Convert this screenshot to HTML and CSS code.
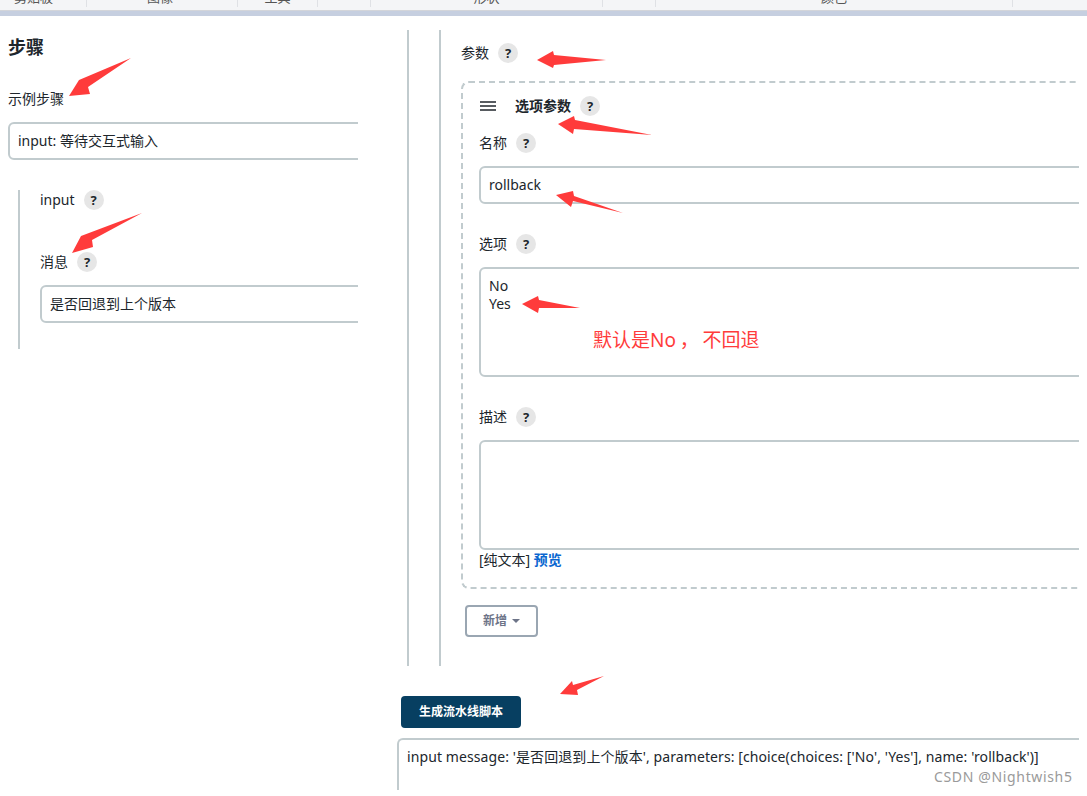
FILE: index.html
```html
<!DOCTYPE html>
<html lang="zh">
<head>
<meta charset="utf-8">
<title>Jenkins input step</title>
<link rel="stylesheet" href="styles.css">
</head>
<body>
<div class="ribbon">
  <div class="group g1"><span>剪贴板</span></div>
  <div class="group g2"><span>图像</span></div>
  <div class="group g3"><span>工具</span></div>
  <div class="group g4"></div>
  <div class="group g5"><span>形状</span></div>
  <div class="group g6"></div>
  <div class="group g7"><span>颜色</span></div>
  <div class="group g8"></div>
</div>
<div class="strip"></div>
<main class="main">
  <section class="left">
    <h2 class="title">步骤</h2>
    <div class="label sample">示例步骤</div>
    <div class="field">input: 等待交互式输入</div>
    <div class="indent">
      <div class="row"><span>input</span><span class="help">?</span></div>
      <div class="row msg"><span>消息</span><span class="help">?</span></div>
      <div class="field">是否回退到上个版本</div>
    </div>
  </section>
  <section class="right">
    <div class="rail">
      <div class="rail-inner">
        <div class="row params"><span>参数</span><span class="help">?</span></div>
        <div class="dashed">
          <div class="row head">
            <svg class="drag" width="16" height="10" viewBox="0 0 16 10"><path d="M0 1h16M0 5h16M0 9h16" stroke="#20262c" stroke-width="1.5"/></svg>
            <strong>选项参数</strong><span class="help">?</span>
          </div>
          <div class="row r-name"><span>名称</span><span class="help">?</span></div>
          <div class="field">rollback</div>
          <div class="row r-next"><span>选项</span><span class="help">?</span></div>
          <div class="area">No<br>Yes</div>
          <div class="row r-next"><span>描述</span><span class="help">?</span></div>
          <div class="area"></div>
          <div class="format">[纯文本] <a class="preview">预览</a></div>
        </div>
        <button class="add">新增<i class="caret"></i></button>
      </div>
    </div>
  </section>
</main>
<section class="bottom">
  <button class="generate">生成流水线脚本</button>
  <div class="code">input message: '是否回退到上个版本', parameters: [choice(choices: ['No', 'Yes'], name: 'rollback')]</div>
</section>

<svg class="arrows" width="1087" height="796" viewBox="0 0 1087 796">
  <polygon points="131,58 88,87 90,94 69,96 79,80"/>
  <polygon points="142,213 92,240 93,247 72,253 81,236"/>
  <polygon points="606,60 554,55 553,51 537,60 553,68 554,65"/>
  <polygon points="652,135 575,120 574,116 558,124 573,134 574,129"/>
  <polygon points="623,213 574,196 573,191 556,195 571,207 573,201"/>
  <polygon points="580,308 539,300 538,296 522,304 538,313 539,308"/>
  <polygon points="604,676 573,685 572,681 560,694 578,695 577,690"/>
</svg>
<div class="note">默认是No ， 不回退</div>
<div class="mark">CSDN @Nightwish5</div>
</body>
</html>
```
FILE: styles.css
```css
* { box-sizing: border-box; }
html, body { margin: 0; padding: 0; }
body {
  width: 1087px;
  height: 796px;
  overflow: hidden;
  position: relative;
  background: #fff;
  color: #20262c;
  font-family: "Noto Sans", "Noto Sans CJK SC", sans-serif;
  font-size: 14px;
  line-height: 20px;
}
.ribbon {
  display: grid;
  grid-template-columns: 87px 151px 80px 53px 232px 53px 357px 1fr;
  height: 10px;
  background: #f4f5f7;
  overflow: hidden;
}
.group {
  height: 7px;
  border-right: 1px solid #dfe1e5;
  text-align: center;
  overflow: hidden;
}
.group span {
  display: block;
  margin-top: -12px;
  font-size: 13px;
  line-height: 18px;
  color: #555;
}
.g1 { padding-right: 19px; }
.g2 { padding-right: 4px; }
.g8 { border-right: 0; }
.strip {
  height: 6px;
  background: #c6cfe0;
  border-top: 1px solid #d3d5da;
}
.main { display: flex; height: 650px; }
.left { width: 358px; padding-left: 8px; overflow: hidden; flex: none; }
.title {
  margin: 20px 0 0;
  font-size: 18px;
  line-height: 22px;
  font-weight: 700;
}
.label { height: 20px; }
.sample { margin-top: 31px; }
.field {
  height: 38px;
  margin-top: 13px;
  width: 800px;
  padding-left: 8px;
  border: 2px solid #c1cbce;
  border-radius: 6px;
  line-height: 34px;
}
.indent {
  margin: 30px 0 0 10px;
  height: 159px;
  padding-left: 20px;
  border-left: 2px solid #c1cbce;
}
.row { display: flex; align-items: center; height: 20px; }
.help {
  width: 20px;
  height: 20px;
  margin-left: 9px;
  flex: none;
  border-radius: 50%;
  background: #e6e6e6;
  text-align: center;
  font-size: 13px;
  font-weight: 700;
  line-height: 20px;
}
.msg { margin-top: 42px; }
.right { width: 672px; margin-left: 49px; margin-top: 14px; overflow: hidden; flex: none; }
.rail {
  height: 636px;
  padding-left: 30px;
  border-left: 2px solid #c1cbce;
}
.rail-inner {
  height: 636px;
  padding: 13px 0 0 20px;
  border-left: 2px solid #c1cbce;
}
.dashed {
  width: 900px;
  margin-top: 18px;
  padding: 13px 0 17px 16px;
  border: 2px dashed #c1cbce;
  border-right: 0;
  border-radius: 8px 0 0 8px;
}
.drag { margin: 0 19px 0 1px; flex: none; }
.head strong { font-size: 14px; font-weight: 700; }
.r-name { margin-top: 17px; }
.r-next { margin-top: 30px; }
.area {
  height: 110px;
  margin-top: 13px;
  padding: 8px;
  border: 2px solid #c1cbce;
  border-radius: 6px;
  line-height: 18px;
}
.format { height: 20px; }
.preview { color: #0a66d0; font-weight: 700; }
.add {
  display: flex;
  align-items: center;
  justify-content: center;
  width: 73px;
  height: 32px;
  margin: 16px 0 0 4px;
  padding: 0;
  background: #fff;
  border: 2px solid #9aa6b2;
  border-radius: 4px;
  color: #6d7488;
  font: 700 12px/20px "Noto Sans", "Noto Sans CJK SC", sans-serif;
}
.caret {
  margin-left: 5px;
  border-left: 4px solid transparent;
  border-right: 4px solid transparent;
  border-top: 4px solid #6d7488;
}
.bottom { margin-top: 30px; padding-left: 397px; }
.generate {
  display: block;
  width: 120px;
  height: 32px;
  margin-left: 4px;
  padding: 0;
  background: #073f61;
  border: 0;
  border-radius: 4px;
  color: #fff;
  font: 700 12px/20px "Noto Sans", "Noto Sans CJK SC", sans-serif;
}
.code {
  width: 682px;
  height: 52px;
  margin-top: 10px;
  padding: 7px 0 0 8px;
  border: 2px solid #c1cbce;
  border-right: 0;
  border-bottom: 0;
  border-top-left-radius: 6px;
  white-space: nowrap;
  overflow: hidden;
  letter-spacing: 0.09px;
}
.arrows { position: absolute; left: 0; top: 0; pointer-events: none; }
.arrows polygon { fill: #ff3b3b; }
.note {
  position: absolute;
  left: 593px;
  top: 327px;
  color: #ff3b3b;
  font-size: 19px;
  line-height: 26px;
  white-space: nowrap;
  word-spacing: -1.2px;
}
.mark {
  position: absolute;
  left: 934px;
  top: 767px;
  color: #9a9a9a;
  font-size: 14px;
  line-height: 20px;
  letter-spacing: 0.65px;
  white-space: nowrap;
}
```
